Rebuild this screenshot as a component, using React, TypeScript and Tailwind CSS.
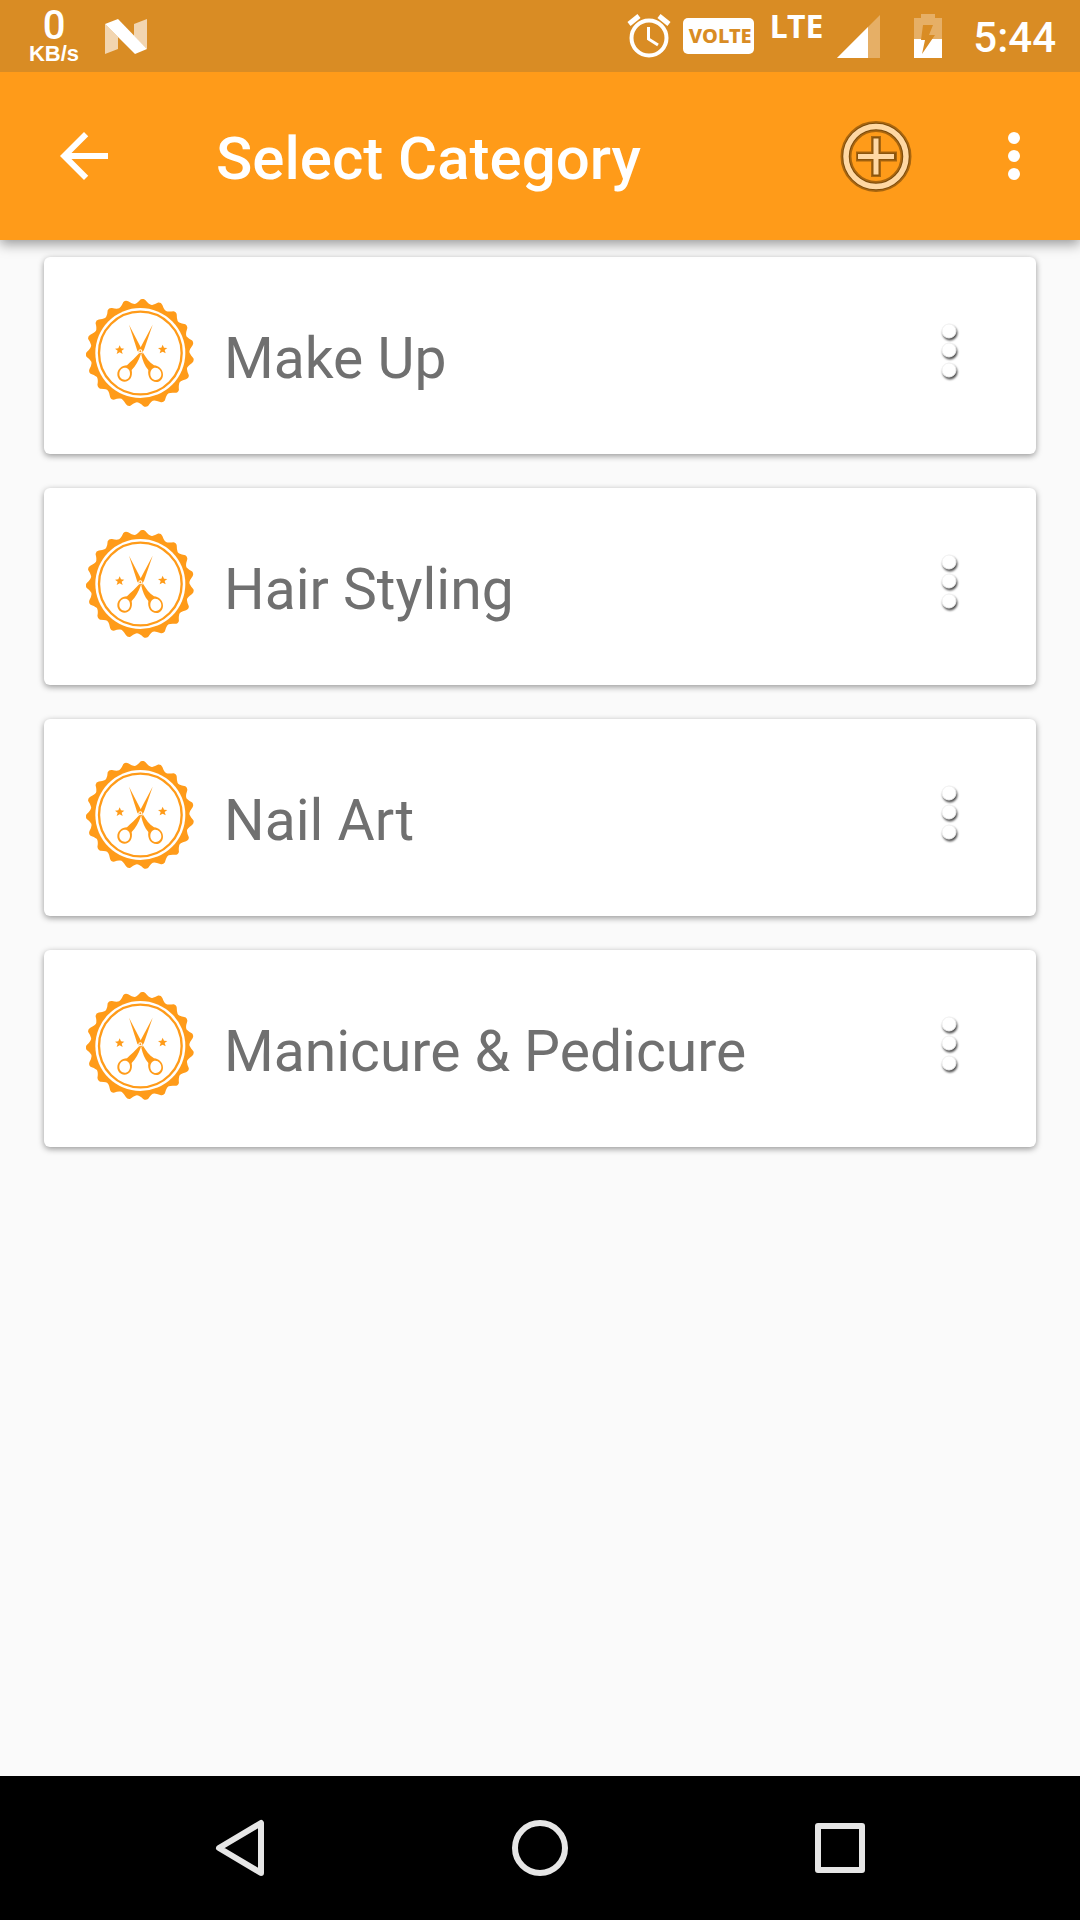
import React from "react";

const categories = ["Make Up", "Hair Styling", "Nail Art", "Manicure & Pedicure"];

const TEETH = 19;

function scallopedEdge(cx: number, cy: number): string {
  const step = (Math.PI * 2) / TEETH;
  const at = (r: number, a: number) =>
    `${(cx + r * Math.sin(a)).toFixed(1)} ${(cy - r * Math.cos(a)).toFixed(1)}`;
  let d = "";
  for (let i = 0; i < TEETH; i++) {
    const a = i * step + 0.045;
    d += i === 0 ? `M${at(161, a - 0.03)}` : `L${at(161, a - 0.03)}`;
    d += `Q${at(165, a + 0.02)} ${at(159, a + 0.06)}`;
    d += `Q${at(144, a + step * 0.5)} ${at(150, a + step * 0.65)}`;
    d += `Q${at(152, a + step * 0.75)} ${at(161, a + step - 0.03)}`;
  }
  return d + "Z";
}

const edgePath = scallopedEdge(162, 162);

function Badge() {
  return (
    <svg viewBox="0 0 324 324" className="size-[108px] shrink-0" fill="#ff9b19" aria-hidden="true">
      <path d={edgePath} />
      <circle cx="163" cy="162" r="135" fill="#fff" />
      <circle cx="163" cy="162" r="124" fill="none" stroke="#ff9b19" strokeWidth="7" />
      <path d="M129 77 L170 156 L164 167 L154 155 Z" />
      <path d="M200 77 L174 152 L165 167 L158 156 Z" />
      <path
        fillRule="evenodd"
        d="M160 162 L164 167 C158 185 149 200 137 213 C141 234 131 248 115 248 C103 248 94 238 94 226 C94 211 107 199 123 199 C135 187 148 176 160 162Z M117 206 C107 206 100 214 100 225 C100 235 107 242 116 242 C126 242 132 234 132 224 C132 213 126 206 117 206Z"
      />
      <path
        fillRule="evenodd"
        d="M171 161 L166 167 C170 185 176 200 187 213 C184 234 195 249 211 249 C223 249 231 238 231 227 C231 212 219 200 204 199 C189 189 180 176 171 161Z M208 206 C218 206 226 215 226 226 C226 236 218 243 210 243 C200 243 193 235 193 225 C193 214 199 206 208 206Z"
      />
      <circle cx="163" cy="157" r="6" fill="#fff" />
      <circle cx="163" cy="157" r="3" />
      <path d="M101 139 L105 148 L115 149 L107 155 L110 165 L101 160 L92 165 L95 155 L87 149 L97 148Z" />
      <path d="M230 137 L234 146 L244 147 L236 153 L239 163 L230 158 L221 163 L224 153 L216 147 L226 146Z" />
    </svg>
  );
}

function StatusBar() {
  return (
    <div className="z-20 flex h-[72px] items-center bg-[#d98c24] pl-7 pr-6 text-white">
      <div className="flex w-[52px] flex-col items-center">
        <span className="text-[40px] font-medium leading-9">0</span>
        <span className="font-['Liberation_Sans',sans-serif] text-[22px] font-bold leading-5">KB/s</span>
      </div>
      <svg viewBox="0 0 42 35" className="ml-[25px] h-[35px] w-[42px]" aria-hidden="true">
        <path d="M0 5 L13 18 V30 L0 35Z M42 0 V30 L29 17 V5Z" fill="#f2d5b0" />
        <path d="M0 5 L13 0 L42 30 L30 35Z" fill="#fff" />
      </svg>
      <div className="ml-auto flex items-center">
        <svg viewBox="0 0 44 44" className="size-11" fill="none" stroke="#fff" aria-label="Alarm">
          <circle cx="22" cy="24" r="17.5" strokeWidth="4" />
          <path d="M2 10 L12 2 M32 2 L42 10" strokeWidth="5" />
          <path d="M21.500 13 V25 L31 31" strokeWidth="3" />
        </svg>
        <span className="ml-3 flex h-9 w-[71px] items-center justify-end rounded-[5px] bg-white pr-0.5 font-['Noto_Sans',sans-serif] text-[20px] font-extrabold leading-9 text-[#d98c24]">
          VOLTE
        </span>
        <span className="ml-4 h-14 font-['Noto_Sans',sans-serif] text-[32px] font-bold leading-9">LTE</span>
        <svg viewBox="0 0 43 43" className="ml-3.5 size-[43px]" aria-label="Signal">
          <path d="M0 43 L43 0 V43Z" fill="#e6af66" />
          <path d="M0 43 L31 12 V43Z" fill="#fff" />
        </svg>
        <svg viewBox="0 0 28 44" className="ml-[34px] h-11 w-7" aria-label="Battery charging">
          <path d="M0 4 H7 V0 H21 V4 H28 V26 H0Z" fill="#e6af66" />
          <path d="M0 25 H28 V44 H0Z" fill="#fff" />
          <path d="M9 11 H19 L15 21 H21 L8 40 L11 26 H7Z" fill="#d98c24" />
        </svg>
        <time className="ml-[31px] pt-1 text-[42px] font-medium leading-[68px]">5:44</time>
      </div>
    </div>
  );
}

function AppBar() {
  return (
    <header className="z-10 flex h-[168px] items-center bg-[#ff9b19] pl-12 pr-[42px] text-white shadow-[0_4px_12px_rgba(0,0,0,0.4)]">
      <button type="button" aria-label="Back" className="size-[72px]">
        <svg viewBox="0 0 24 24" fill="#fff">
          <path d="M20 11H7.830l5.590-5.590L12 4l-8 8 8 8 1.410-1.410L7.830 13H20v-2z" />
        </svg>
      </button>
      <h1 className="ml-24 pt-1.5 text-[60px] font-medium leading-[72px]">Select Category</h1>
      <button type="button" aria-label="Add category" className="ml-auto size-[72px]">
        <svg viewBox="0 0 72 72" fill="none">
          <circle cx="36" cy="36.500" r="30" stroke="#a9660f" strokeWidth="11" />
          <circle cx="36" cy="36.500" r="30" stroke="#7a4a0b" strokeWidth="7.500" />
          <circle cx="36" cy="36.500" r="30" stroke="#ffd8a3" strokeWidth="5.500" />
          <path d="M36 16 V57 M16 36.500 H57" stroke="#a9660f" strokeWidth="10" />
          <path d="M36 17 V56 M17 36.500 H56" stroke="#8a540c" strokeWidth="7.500" />
          <path d="M36 18.500 V54.500 M18 36.500 H54" stroke="#ffd8a3" strokeWidth="5" />
        </svg>
      </button>
      <button type="button" aria-label="More options" className="ml-[78px] h-[72px] w-12">
        <svg viewBox="0 0 48 72" fill="#fff">
          <circle cx="24" cy="18" r="6" />
          <circle cx="24" cy="36" r="6" />
          <circle cx="24" cy="54" r="6" />
        </svg>
      </button>
    </header>
  );
}

function CategoryCard({ name }: { name: string }) {
  return (
    <li className="flex h-[197px] items-center rounded-md bg-white pb-1.5 pl-[42px] pr-16 shadow-[0_2px_6px_rgba(0,0,0,0.4)]">
      <Badge />
      <h2 className="ml-[30px] pt-3 text-[57px] leading-[72px] text-[#707070]">{name}</h2>
      <button type="button" aria-label={`Options for ${name}`} className="ml-auto h-[72px] w-12">
        <svg viewBox="0 0 48 72" fill="#fff">
          <g className="drop-shadow-[1px_2px_1px_rgba(0,0,0,0.7)]" stroke="#f0f0f0" strokeWidth="1">
            <circle cx="25" cy="14" r="7" />
            <circle cx="25" cy="33" r="7" />
            <circle cx="25" cy="53" r="7" />
          </g>
        </svg>
      </button>
    </li>
  );
}

function NavigationBar() {
  return (
    <nav className="flex h-36 items-center justify-center gap-[228px] bg-black">
      <button type="button" aria-label="Back" className="size-[72px]">
        <svg viewBox="0 0 72 72" fill="none" stroke="#e6e6e6" strokeWidth="6" strokeLinejoin="round">
          <path d="M57 11 V61 L15 36Z" />
        </svg>
      </button>
      <button type="button" aria-label="Home" className="size-[72px]">
        <svg viewBox="0 0 72 72" fill="none" stroke="#e6e6e6" strokeWidth="6">
          <circle cx="36" cy="36" r="25" />
        </svg>
      </button>
      <button type="button" aria-label="Recent apps" className="size-[72px]">
        <svg viewBox="0 0 72 72" fill="none" stroke="#e6e6e6" strokeWidth="6" strokeLinejoin="round">
          <rect x="14" y="14" width="44" height="44" />
        </svg>
      </button>
    </nav>
  );
}

export default function App() {
  return (
    <div className="flex min-h-screen flex-col bg-[#fafafa] font-[Roboto,sans-serif]">
      <StatusBar />
      <AppBar />
      <main className="flex-1 px-11 pt-[17px]">
        <ul className="flex flex-col gap-[34px]">
          {categories.map((name) => (
            <CategoryCard key={name} name={name} />
          ))}
        </ul>
      </main>
      <NavigationBar />
    </div>
  );
}
